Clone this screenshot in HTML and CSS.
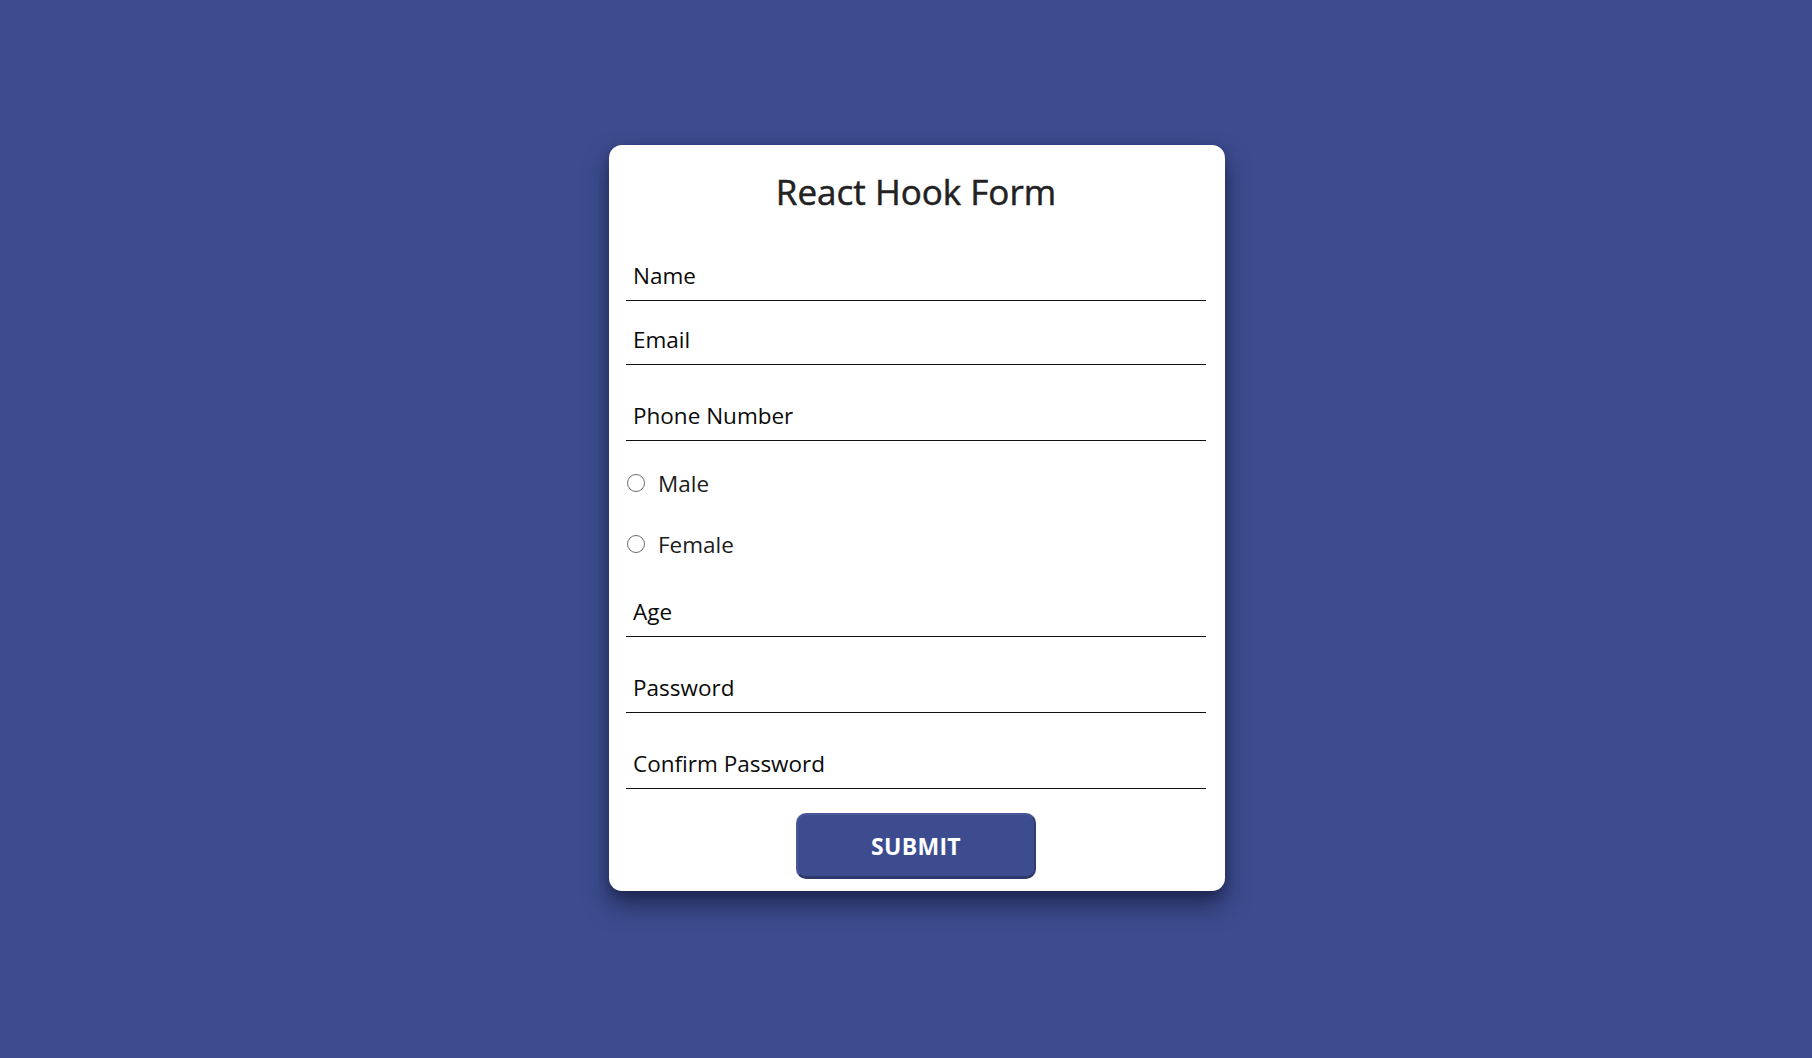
FILE: index.html
```html
<!DOCTYPE html>
<html lang="en">
<head>
<meta charset="utf-8">
<title>React Hook Form</title>
<link rel="stylesheet" href="styles.css">
</head>
<body>
<main class="page">
  <form class="card">
    <div class="card-head">
      <h1 class="title">React Hook Form</h1>
    </div>
    <input class="field" type="text" placeholder="Name">
    <input class="field gap-sm" type="email" placeholder="Email">
    <input class="field gap-md" type="tel" placeholder="Phone Number">
    <label class="radio-row first-radio"><input class="radio" type="radio" name="gender" value="male"><span>Male</span></label>
    <label class="radio-row next-radio"><input class="radio" type="radio" name="gender" value="female"><span>Female</span></label>
    <input class="field gap-age" type="number" placeholder="Age">
    <input class="field gap-md" type="password" placeholder="Password">
    <input class="field gap-md" type="password" placeholder="Confirm Password">
    <button class="submit" type="submit">SUBMIT</button>
  </form>
</main>
</body>
</html>
```

FILE: styles.css
```css
html, body {
  margin: 0;
  padding: 0;
}

body {
  background: #3d4c8f;
  font-family: "Open Sans", "Noto Sans", "Liberation Sans", sans-serif;
  min-height: 1058px;
}

.page {
  display: flex;
  justify-content: center;
  padding-top: 145px;
  padding-left: 22px;
}

.card {
  width: 616px;
  box-sizing: border-box;
  background: #ffffff;
  border-radius: 13px;
  padding: 0 19px 12px 17px;
  display: flex;
  flex-direction: column;
  box-shadow: 0 14px 24px rgba(10, 14, 40, 0.55), 0 3px 10px rgba(10, 14, 40, 0.25);
}

.card-head {
  height: 108px;
  box-sizing: border-box;
  padding-top: 23px;
}

.title {
  margin: 0;
  text-align: center;
  font-size: 35px;
  font-weight: 400;
  -webkit-text-stroke: 0.5px #222222;
  line-height: 48px;
  color: #222222;
  letter-spacing: 0;
}

.field {
  display: block;
  width: 100%;
  height: 48px;
  box-sizing: border-box;
  border: none;
  border-bottom: 1.3px solid #111111;
  outline: none;
  padding: 0 0 3px 7px;
  margin: 0;
  font-family: inherit;
  font-size: 22.5px;
  color: #000000;
  background: transparent;
}

.field::placeholder {
  color: #0a0a0a;
  opacity: 1;
}

.field::-webkit-outer-spin-button,
.field::-webkit-inner-spin-button {
  -webkit-appearance: none;
  margin: 0;
}

.gap-sm { margin-top: 16px; }
.gap-md { margin-top: 28px; }
.gap-age { margin-top: 25px; }

.radio-row {
  display: flex;
  align-items: center;
  height: 40px;
  font-size: 22.5px;
  color: #1c1c1c;
}

.first-radio { margin-top: 22px; }
.next-radio { margin-top: 21px; }

.radio {
  -webkit-appearance: none;
  appearance: none;
  width: 18px;
  height: 18px;
  box-sizing: border-box;
  border: 1.5px solid #6e6e6e;
  border-radius: 50%;
  margin: 0 13px 0 1px;
  background: #ffffff;
}

.submit {
  align-self: center;
  margin-top: 24px;
  width: 240px;
  height: 66px;
  box-sizing: border-box;
  background: #3d4c8f;
  color: #ffffff;
  border-style: solid;
  border-width: 2px 2px 3px 2px;
  border-color: #4a5798 #313c72 #2e386b #4a5798;
  border-radius: 10px;
  font-family: inherit;
  font-size: 23px;
  font-weight: 700;
  letter-spacing: 0.3px;
  padding: 0;
}
```
